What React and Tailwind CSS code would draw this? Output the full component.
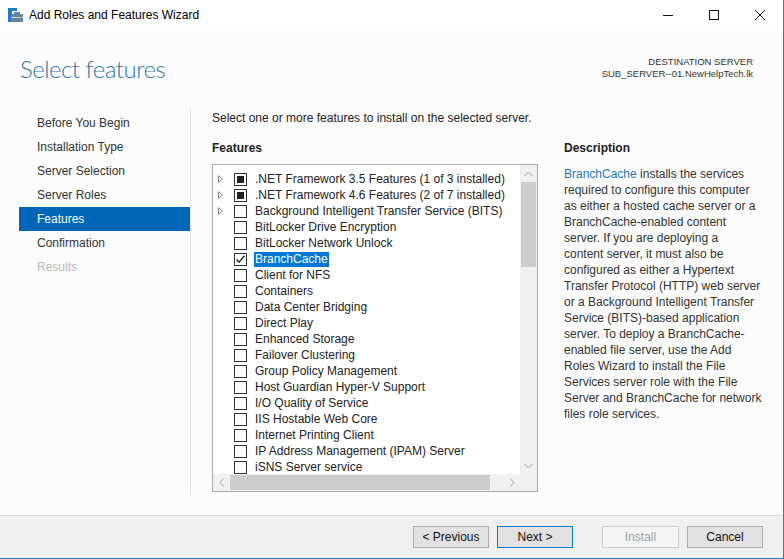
import React from 'react'

const features = [
  { name: '.NET Framework 3.5 Features (1 of 3 installed)', exp: true, state: 'partial' },
  { name: '.NET Framework 4.6 Features (2 of 7 installed)', exp: true, state: 'partial' },
  { name: 'Background Intelligent Transfer Service (BITS)', exp: true },
  { name: 'BitLocker Drive Encryption' },
  { name: 'BitLocker Network Unlock' },
  { name: 'BranchCache', state: 'checked', selected: true },
  { name: 'Client for NFS' },
  { name: 'Containers' },
  { name: 'Data Center Bridging' },
  { name: 'Direct Play' },
  { name: 'Enhanced Storage' },
  { name: 'Failover Clustering' },
  { name: 'Group Policy Management' },
  { name: 'Host Guardian Hyper-V Support' },
  { name: 'I/O Quality of Service' },
  { name: 'IIS Hostable Web Core' },
  { name: 'Internet Printing Client' },
  { name: 'IP Address Management (IPAM) Server' },
  { name: 'iSNS Server service' },
]

const steps = ['Before You Begin', 'Installation Type', 'Server Selection', 'Server Roles', 'Features', 'Confirmation', 'Results']

const descLines = [
  'installs the services',
  'required to configure this computer',
  'as either a hosted cache server or a',
  'BranchCache-enabled content',
  'server. If you are deploying a',
  'content server, it must also be',
  'configured as either a Hypertext',
  'Transfer Protocol (HTTP) web server',
  'or a Background Intelligent Transfer',
  'Service (BITS)-based application',
  'server. To deploy a BranchCache-',
  'enabled file server, use the Add',
  'Roles Wizard to install the File',
  'Services server role with the File',
  'Server and BranchCache for network',
  'files role services.',
]

function Checkbox({ state }) {
  return (
    <div className="w-[13px] h-[13px] border border-[#333] bg-white flex items-center justify-center shrink-0">
      {state === 'partial' && <div className="w-[7px] h-[7px] bg-[#222]" />}
      {state === 'checked' && (
        <svg width="11" height="11" viewBox="0 0 11 11">
          <path d="M1.5 5.5 L4 8.2 L9.5 1.8" fill="none" stroke="#222" strokeWidth="1.4" />
        </svg>
      )}
    </div>
  )
}

function Btn({ children, primary, disabled, wide }) {
  return (
    <div
      className={
        (wide ? 'w-[77px]' : 'w-[76px]') +
        ' h-[22px] flex items-center justify-center text-[12px] border ' +
        (disabled
          ? 'bg-[#f4f4f4] border-[#cfcfcf] text-[#a0a0a0]'
          : primary
          ? 'bg-[#e1e1e1] border-[#0078d7] text-[#111]'
          : 'bg-[#e1e1e1] border-[#adadad] text-[#111]')
      }
    >
      {children}
    </div>
  )
}

export default function App() {
  return (
    <div
      className="w-[784px] h-[559px] bg-[#fcfcfc] flex flex-col border-r border-b border-[#1883d7] text-[#222] overflow-hidden"
      style={{ fontFamily: '"Segoe UI", "Liberation Sans", Arial, sans-serif' }}
    >
      {/* title bar */}
      <div className="h-[30px] bg-white flex items-center shrink-0">
        <svg className="ml-[8px]" width="15" height="15" viewBox="0 0 15 15">
          <rect x="0" y="0" width="4" height="14" fill="#1e7bd0" />
          <rect x="0" y="0" width="9" height="3" fill="#1e7bd0" />
          <rect x="3" y="6" width="12" height="8" fill="#6b8295" />
          <rect x="6" y="4" width="6" height="2" fill="#6b8295" />
          <rect x="3" y="9" width="12" height="1" fill="#c9d3db" />
        </svg>
        <span className="ml-[6px] text-[12px] text-black">Add Roles and Features Wizard</span>
        <div className="ml-auto flex h-full">
          <div className="w-[46px] flex items-center justify-center">
            <svg width="10" height="10" viewBox="0 0 10 10"><path d="M0 5.5 H10" stroke="#111" strokeWidth="1" /></svg>
          </div>
          <div className="w-[46px] flex items-center justify-center">
            <svg width="10" height="10" viewBox="0 0 10 10"><rect x="0.5" y="0.5" width="9" height="9" fill="none" stroke="#111" strokeWidth="1" /></svg>
          </div>
          <div className="w-[46px] flex items-center justify-center">
            <svg width="10" height="10" viewBox="0 0 10 10"><path d="M0 0 L10 10 M10 0 L0 10" stroke="#111" strokeWidth="1" /></svg>
          </div>
        </div>
      </div>

      {/* header */}
      <div className="h-[78px] flex items-start shrink-0">
        <div
          className="ml-[20px] mt-[27px] text-[24px] font-light text-[#2b78a8] leading-none tracking-[-0.5px]"
          style={{ fontFamily: 'Lato, "Open Sans", sans-serif' }}
        >
          Select features
        </div>
        <div className="ml-auto mr-[30px] mt-[26px] text-right text-[9.5px] leading-[12px] text-[#333]">
          <div>DESTINATION SERVER</div>
          <div>SUB_SERVER--01.NewHelpTech.lk</div>
        </div>
      </div>

      {/* body */}
      <div className="flex h-[386px] shrink-0">
        <div className="w-[172px] ml-[19px] pt-[3px] border-r border-[#e3e3e3]">
          {steps.map((s) => (
            <div
              key={s}
              className={
                'h-[24px] pl-[18px] flex items-center text-[12px] ' +
                (s === 'Features' ? 'bg-[#0067b8] text-white' : s === 'Results' ? 'text-[#b9b9b9]' : 'text-[#333]')
              }
            >
              {s}
            </div>
          ))}
        </div>

        <div className="ml-[21px] flex flex-col">
          <div className="h-[18px] mt-[1px] text-[12px] text-[#222] flex items-center">Select one or more features to install on the selected server.</div>
          <div className="flex gap-[26px] mt-[12px]">
            <div className="flex flex-col">
              <div className="h-[18px] text-[12px] font-semibold text-[#222] flex items-center">Features</div>
              <div className="mt-[7px] w-[326px] h-[328px] border border-[#ababab] bg-white flex flex-col">
                <div className="flex h-[309px]">
                  <div className="flex-1 overflow-hidden pt-[6px]">
                    {features.map((f) => (
                      <div key={f.name} className="h-[16px] flex items-center text-[12px] text-[#222] whitespace-nowrap">
                        <div className="w-[21px] flex justify-end pr-[11px]">
                          {f.exp && (
                            <svg width="5" height="8" viewBox="0 0 5 8"><path d="M0.5 0.5 L4.2 4 L0.5 7.5 Z" fill="none" stroke="#8a8a8a" strokeWidth="1" /></svg>
                          )}
                        </div>
                        <Checkbox state={f.state} />
                        <span className={'ml-[7px] px-[1px] leading-[15px] ' + (f.selected ? 'bg-[#0078d7] text-white' : '')}>{f.name}</span>
                      </div>
                    ))}
                  </div>
                  <div className="w-[17px] bg-[#f0f0f0] flex flex-col items-center">
                    <div className="h-[17px] flex items-center justify-center">
                      <svg width="9" height="6" viewBox="0 0 9 6"><path d="M0.5 5 L4.5 1 L8.5 5" fill="none" stroke="#a3a3a3" strokeWidth="1" /></svg>
                    </div>
                    <div className="w-[15px] h-[85px] bg-[#cdcdcd]" />
                    <div className="mt-auto h-[17px] flex items-center justify-center">
                      <svg width="9" height="6" viewBox="0 0 9 6"><path d="M0.5 1 L4.5 5 L8.5 1" fill="none" stroke="#a3a3a3" strokeWidth="1" /></svg>
                    </div>
                  </div>
                </div>
                <div className="h-[17px] flex bg-[#f0f0f0]">
                  <div className="w-[17px] flex items-center justify-center">
                    <svg width="6" height="9" viewBox="0 0 6 9"><path d="M5 0.5 L1 4.5 L5 8.5" fill="none" stroke="#a3a3a3" strokeWidth="1" /></svg>
                  </div>
                  <div className="w-[260px] h-[15px] mt-[1px] bg-[#cdcdcd]" />
                  <div className="ml-auto w-[17px] flex items-center justify-center">
                    <svg width="6" height="9" viewBox="0 0 6 9"><path d="M1 0.5 L5 4.5 L1 8.5" fill="none" stroke="#a3a3a3" strokeWidth="1" /></svg>
                  </div>
                  <div className="w-[17px] bg-[#f0f0f0]" />
                </div>
              </div>
            </div>
            <div className="flex flex-col">
              <div className="h-[18px] text-[12px] font-semibold text-[#222] flex items-center">Description</div>
              <div className="mt-[9px] text-[12px] leading-[16px] text-[#333] whitespace-nowrap">
                {descLines.map((l, i) => (
                  <div key={i}>
                    {i === 0 && <span className="text-[#1e74b0]">BranchCache </span>}
                    {l}
                  </div>
                ))}
              </div>
            </div>
          </div>
        </div>
      </div>

      {/* footer */}
      <div className="mt-auto h-[43px] bg-[#f0f0f0] border-t border-[#dcdcdc] flex items-center justify-end pr-[20px] pb-[1px]">
        <div className="flex gap-[8px]">
          <Btn>&lt; Previous</Btn>
          <Btn primary>Next &gt;</Btn>
        </div>
        <div className="flex gap-[8px] ml-[29px]">
          <Btn disabled wide>Install</Btn>
          <Btn>Cancel</Btn>
        </div>
      </div>
    </div>
  )
}
